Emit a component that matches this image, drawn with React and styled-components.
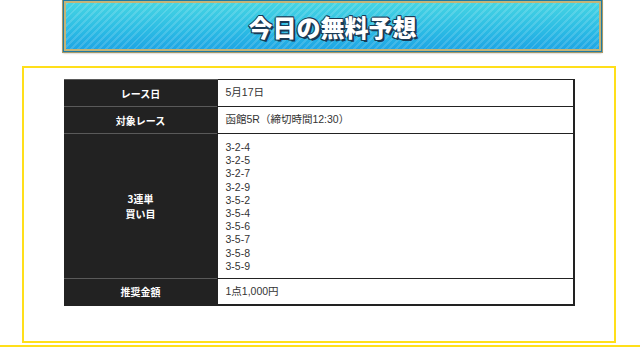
import React from "react";
import styled, { createGlobalStyle } from "styled-components";

const GlobalStyle = createGlobalStyle`
  body {
    margin: 0;
    background: #fff;
    font-family: "Liberation Sans", "Noto Sans CJK JP", sans-serif;
  }
`;

const Page = styled.div`
  width: 640px;
  height: 347px;
  overflow: hidden;
`;

const Banner = styled.div`
  margin-left: 63px;
  width: 533px;
  height: 46px;
  border: 3px solid #c4b477;
  box-shadow: 0 0 0 1px #a89a66, 0 1px 2px rgba(0, 0, 0, 0.35);
  display: flex;
  align-items: center;
  justify-content: center;
  background:
    repeating-linear-gradient(135deg, rgba(255, 255, 255, 0.14) 0 2px, rgba(255, 255, 255, 0) 2px 5px),
    linear-gradient(#46d4e3, #2bbbe4 60%, #1fa6e4);
  outline: 1px solid #1f7aa3;
  outline-offset: -1px;
`;

const Title = styled.h2`
  margin: 0;
  color: #fff;
  font-family: "Noto Sans CJK JP", sans-serif;
  font-weight: 900;
  font-size: 24px;
  text-shadow:
    1px 1px 0 #1a3a55,
    2px 2px 0 #1a3a55,
    -1px 0 0 #1a3a55,
    0 -1px 0 #1a3a55,
    1px -1px 0 #1a3a55,
    -1px 1px 0 #1a3a55;
`;

const Box = styled.div`
  margin: 14px 0 0 22px;
  width: 590px;
  height: 262px;
  border: 2px solid #ffdf1a;
  padding-top: 11px;
  box-sizing: content-box;
  display: flex;
  justify-content: center;
  align-items: flex-start;
`;

const Table = styled.table`
  width: 511px;
  border-collapse: collapse;
  border: 1px solid #222;
  border-right-width: 2px;
  border-bottom-width: 2px;
`;

const Head = styled.th`
  width: 152px;
  background: #222;
  color: #fff;
  font-family: "Noto Sans CJK JP", sans-serif;
  font-weight: 700;
  font-size: 10px;
  line-height: 15px;
  text-align: center;
  border-top: 1px solid #5a5a5a;
  padding: 0;
  height: ${(p) => p.$h}px;
`;

const Cell = styled.td`
  background: #fff;
  color: #333;
  font-size: 10.5px;
  line-height: 13.2px;
  padding: ${(p) => (p.$list ? "7px 8px 5px" : "0 8px")};
  border-top: 1px solid #222;
  border-left: 1px solid #222;
  height: ${(p) => p.$h}px;
  vertical-align: middle;
`;

const Pick = styled.div`
  white-space: nowrap;
`;

const Edge = styled.div`
  margin-top: 2px;
  height: 2px;
  background: #ffdf1a;
`;

const picks = ["3-2-4", "3-2-5", "3-2-7", "3-2-9", "3-5-2", "3-5-4", "3-5-6", "3-5-7", "3-5-8", "3-5-9"];

export default function App() {
  return (
    <Page>
      <GlobalStyle />
      <Banner>
        <Title>今日の無料予想</Title>
      </Banner>
      <Box>
        <Table>
          <tbody>
            <tr>
              <Head $h={26}>レース日</Head>
              <Cell $h={26}>5月17日</Cell>
            </tr>
            <tr>
              <Head $h={26}>対象レース</Head>
              <Cell $h={26}>函館5R（締切時間12:30）</Cell>
            </tr>
            <tr>
              <Head>
                3連単
                <br />
                買い目
              </Head>
              <Cell $list>
                {picks.map((p) => (
                  <Pick key={p}>{p}</Pick>
                ))}
              </Cell>
            </tr>
            <tr>
              <Head $h={25}>推奨金額</Head>
              <Cell $h={25}>1点1,000円</Cell>
            </tr>
          </tbody>
        </Table>
      </Box>
      <Edge />
    </Page>
  );
}
